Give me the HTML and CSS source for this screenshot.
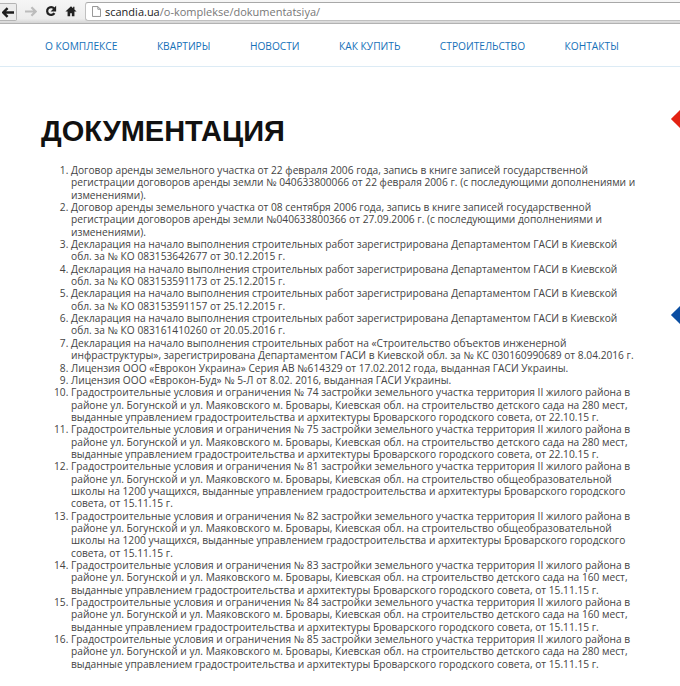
FILE: index.html
```html
<!DOCTYPE html>
<html lang="ru">
<head>
<meta charset="utf-8">
<title>Документация</title>
<link rel="stylesheet" href="styles.css">
</head>
<body>
<div class="toolbar">
  <div class="back-btn">
    <svg width="12" height="11" viewBox="0 0 14 12"><path d="M6.5 1 1.5 6l5 5M2 6h12" fill="none" stroke="#1c1c1c" stroke-width="2.8"/></svg>
  </div>
  <svg class="tool" width="12" height="11" viewBox="0 0 14 12"><path d="M7.5 1 12.5 6l-5 5M12 6H0" fill="none" stroke="#bcbcbc" stroke-width="2.6"/></svg>
  <svg class="tool" width="12" height="12" viewBox="0 0 14 14"><path d="M11 9.5A4.6 4.6 0 1 1 10.6 4" fill="none" stroke="#222" stroke-width="2.6"/><path d="M13 1V7.5H6.5z" fill="#222"/></svg>
  <svg class="tool" width="12" height="12" viewBox="0 0 14 13"><path d="M7 1 0.5 7H3v5.5h3V9h2v3.5h3V7h2.5L11 4.7V1.5H9.5v1.8z" fill="#222"/></svg>
  <div class="omnibox">
    <svg class="page-icon" width="9" height="11" viewBox="0 0 10 12"><path d="M.5.5h6l3 3v8H.5zM6.5.5v3h3" fill="#fff" stroke="#888"/></svg>
    <span class="host">scandia.ua</span><span class="path">/o-komplekse/dokumentatsiya/</span>
  </div>
</div>
<nav class="nav">
  <a href="#">О КОМПЛЕКСЕ</a>
  <a href="#">КВАРТИРЫ</a>
  <a href="#">НОВОСТИ</a>
  <a href="#">КАК КУПИТЬ</a>
  <a href="#">СТРОИТЕЛЬСТВО</a>
  <a href="#">КОНТАКТЫ</a>
</nav>
<main class="content">
  <i class="marker red"></i>
  <i class="marker blue"></i>
  <h1>ДОКУМЕНТАЦИЯ</h1>
  <ol>
    <li>Договор аренды земельного участка от 22 февраля 2006 года, запись в книге записей государственной регистрации договоров аренды земли № 040633800066 от 22 февраля 2006 г. (с последующими дополнениями и изменениями).</li>
    <li>Договор аренды земельного участка от 08 сентября 2006 года, запись в книге записей государственной регистрации договоров аренды земли №040633800366 от 27.09.2006 г. (с последующими дополнениями и изменениями).</li>
    <li>Декларация на начало выполнения строительных работ зарегистрирована Департаментом ГАСИ в Киевской обл. за № КО 083153642677 от 30.12.2015 г.</li>
    <li>Декларация на начало выполнения строительных работ зарегистрирована Департаментом ГАСИ в Киевской обл. за № КО 083153591173 от 25.12.2015 г.</li>
    <li>Декларация на начало выполнения строительных работ зарегистрирована Департаментом ГАСИ в Киевской обл. за № КО 083153591157 от 25.12.2015 г.</li>
    <li>Декларация на начало выполнения строительных работ зарегистрирована Департаментом ГАСИ в Киевской обл. за № КО 083161410260 от 20.05.2016 г.</li>
    <li>Декларация на начало выполнения строительных работ на «Строительство объектов инженерной инфраструктуры», зарегистрирована Департаментом ГАСИ в Киевской обл. за № КС 030160990689 от 8.04.2016 г.</li>
    <li>Лицензия ООО «Еврокон Украина» Серия АВ №614329 от 17.02.2012 года, выданная ГАСИ Украины.</li>
    <li>Лицензия ООО «Еврокон-Буд» № 5-Л от 8.02. 2016, выданная ГАСИ Украины.</li>
    <li>Градостроительные условия и ограничения № 74 застройки земельного участка территория II жилого района в районе ул. Богунской и ул. Маяковского м. Бровары, Киевская обл. на строительство детского сада на 280 мест, выданные управлением градостроительства и архитектуры Броварского городского совета, от 22.10.15 г.</li>
    <li>Градостроительные условия и ограничения № 75 застройки земельного участка территория II жилого района в районе ул. Богунской и ул. Маяковского м. Бровары, Киевская обл. на строительство детского сада на 280 мест, выданные управлением градостроительства и архитектуры Броварского городского совета, от 22.10.15 г.</li>
    <li>Градостроительные условия и ограничения № 81 застройки земельного участка территория II жилого района в районе ул. Богунской и ул. Маяковского м. Бровары, Киевская обл. на строительство общеобразовательной школы на 1200 учащихся, выданные управлением градостроительства и архитектуры Броварского городского совета, от 15.11.15 г.</li>
    <li>Градостроительные условия и ограничения № 82 застройки земельного участка территория II жилого района в районе ул. Богунской и ул. Маяковского м. Бровары, Киевская обл. на строительство общеобразовательной школы на 1200 учащихся, выданные управлением градостроительства и архитектуры Броварского городского совета, от 15.11.15 г.</li>
    <li>Градостроительные условия и ограничения № 83 застройки земельного участка территория II жилого района в районе ул. Богунской и ул. Маяковского м. Бровары, Киевская обл. на строительство детского сада на 160 мест, выданные управлением градостроительства и архитектуры Броварского городского совета, от 15.11.15 г.</li>
    <li>Градостроительные условия и ограничения № 84 застройки земельного участка территория II жилого района в районе ул. Богунской и ул. Маяковского м. Бровары, Киевская обл. на строительство детского сада на 160 мест, выданные управлением градостроительства и архитектуры Броварского городского совета, от 15.11.15 г.</li>
    <li>Градостроительные условия и ограничения № 85 застройки земельного участка территория II жилого района в районе ул. Богунской и ул. Маяковского м. Бровары, Киевская обл. на строительство детского сада на 280 мест, выданные управлением градостроительства и архитектуры Броварского городского совета, от 15.11.15 г.</li>
  </ol>
</main>
</body>
</html>
```
FILE: styles.css
```css
html, body { margin: 0; padding: 0; background: #fff; height: 686px; overflow: hidden; }
body { font-family: "Open Sans", sans-serif; color: #333; }
.toolbar {
  height: 24px; box-sizing: border-box; display: flex; align-items: center; gap: 8px;
  padding: 1px 0 2px;
  background: linear-gradient(#f6f6f6, #ececec 82%, #d4d4d4);
  border-bottom: 1px solid #b2b2b2;
}
.back-btn {
  width: 17px; height: 18px; margin-top: 2px; box-sizing: border-box; display: flex; align-items: center; justify-content: center;
  background: #ececec; border: 1px solid #b4b4b4; border-left: 0; border-radius: 0 2px 2px 0;
}
.tool { flex: none; }
.omnibox {
  flex: 1; height: 19px; margin-right: -2px; box-sizing: border-box; display: flex; align-items: center;
  background: #fff; border: 1px solid #c0c0c0; border-top-color: #a8a8a8; border-right: 0; border-radius: 3px 0 0 3px;
  padding-left: 6px; font-size: 11px; white-space: nowrap;
}
.page-icon { margin-right: 4px; flex: none; }
.host { color: #222; }
.path { color: #777; }
.nav {
  height: 43px; box-sizing: border-box; display: flex; align-items: center; gap: 39.5px;
  padding: 2px 0 0 45px; border-bottom: 1px solid #dcebf5;
}
.nav a { color: #1570b8; font-size: 10.2px; text-decoration: none; white-space: nowrap; }
.content { position: relative; padding: 49px 44px 0 41px; }
h1 { margin: -1px 0 17px; font: bold 29px/32px "Liberation Sans", Arial, sans-serif; color: #111; }
ol { margin: 0; padding: 0 0 0 30px; font-size: 10.2px; line-height: 12.35px; color: #444; }
.marker { position: absolute; right: -10px; width: 20px; height: 20px; transform: rotate(45deg) scale(.64); }
.red { top: 42px; background: #e32213; }
.blue { top: 238px; background: #0b4ea2; }
```
